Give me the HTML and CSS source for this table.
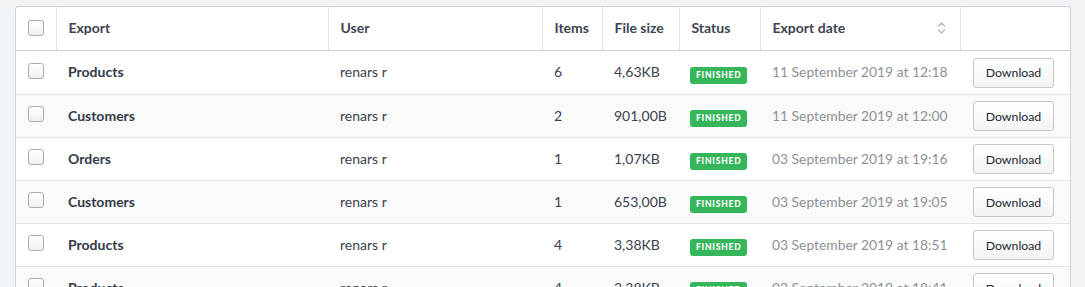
FILE: index.html
```html
<!DOCTYPE html>
<html>
<head>
<meta charset="utf-8">
<link rel="stylesheet" href="styles.css">
</head>
<body>
<div class="card">
<table class="exports">
<colgroup>
<col class="c-check"><col class="c-export"><col class="c-user"><col class="c-items"><col class="c-size"><col class="c-status"><col class="c-date"><col class="c-action">
</colgroup>
<thead>
<tr>
<th class="check"><span class="box"></span></th>
<th>Export</th>
<th>User</th>
<th>Items</th>
<th>File size</th>
<th>Status</th>
<th class="sortable"><span class="th-inner">Export date<svg class="sort" width="9" height="14" viewBox="0 0 9 14"><path d="M1.5 5 L4.5 2 L7.5 5" fill="none" stroke="#b5bec8" stroke-width="1.6" stroke-linecap="round" stroke-linejoin="round"/><path d="M1.5 9 L4.5 12 L7.5 9" fill="none" stroke="#b5bec8" stroke-width="1.6" stroke-linecap="round" stroke-linejoin="round"/></svg></span></th>
<th></th>
</tr>
</thead>
<tbody>
<tr><td class="check"><span class="box"></span></td><td class="name">Products</td><td>renars r</td><td>6</td><td>4,63KB</td><td><span class="badge">Finished</span></td><td class="date">11 September 2019 at 12:18</td><td class="action"><button class="btn">Download</button></td></tr>
<tr><td class="check"><span class="box"></span></td><td class="name">Customers</td><td>renars r</td><td>2</td><td>901,00B</td><td><span class="badge">Finished</span></td><td class="date">11 September 2019 at 12:00</td><td class="action"><button class="btn">Download</button></td></tr>
<tr><td class="check"><span class="box"></span></td><td class="name">Orders</td><td>renars r</td><td>1</td><td>1,07KB</td><td><span class="badge">Finished</span></td><td class="date">03 September 2019 at 19:16</td><td class="action"><button class="btn">Download</button></td></tr>
<tr><td class="check"><span class="box"></span></td><td class="name">Customers</td><td>renars r</td><td>1</td><td>653,00B</td><td><span class="badge">Finished</span></td><td class="date">03 September 2019 at 19:05</td><td class="action"><button class="btn">Download</button></td></tr>
<tr><td class="check"><span class="box"></span></td><td class="name">Products</td><td>renars r</td><td>4</td><td>3,38KB</td><td><span class="badge">Finished</span></td><td class="date">03 September 2019 at 18:51</td><td class="action"><button class="btn">Download</button></td></tr>
<tr><td class="check"><span class="box"></span></td><td class="name">Products</td><td>renars r</td><td>4</td><td>3,38KB</td><td><span class="badge">Finished</span></td><td class="date">03 September 2019 at 18:41</td><td class="action"><button class="btn">Download</button></td></tr>
</tbody>
</table>
</div>
</body>
</html>
```
FILE: styles.css
```css
html, body {
  margin: 0;
  background: #f1f4f7;
  height: 100%;
  overflow: hidden;
}
body {
  padding: 6px 14px 0 15px;
  font-family: Lato, "Open Sans", sans-serif;
  font-size: 14px;
  color: #3a4150;
}
.card {
  background: #fff;
  border: 1px solid #cdd3d9;
  border-radius: 3px;
  overflow: hidden;
}
.exports {
  width: 100%;
  border-collapse: collapse;
  table-layout: fixed;
}
.c-check { width: 40px; }
.c-export { width: 272px; }
.c-user { width: 214px; }
.c-items { width: 60px; }
.c-size { width: 77px; }
.c-status { width: 81px; }
.c-date { width: 200px; }
.c-action { width: auto; }
th {
  height: 41px;
  padding: 0 12px 2px;
  text-align: left;
  font-weight: 700;
  color: #3d4452;
  border-left: 1px solid #e3e6e9;
  border-bottom: 1px solid #c9d0d6;
  white-space: nowrap;
}
th:first-child { border-left: none; }
td {
  height: 40px;
  padding: 0 12px 2px;
  border-top: 1px solid #e2e4e6;
  white-space: nowrap;
  color: #3a4150;
}
tbody tr:first-child td { border-top: none; height: 41px; }
tbody tr:nth-child(even) td { background: #fafafa; }
th.check { padding: 0 0 2px 12px; }
td.check { padding: 0 0 2px 12px; }
td.action { padding-left: 13px; }
td.name { font-weight: 700; color: #333a48; }
td.date { color: #8c9198; font-size: 13.85px; }
.box {
  display: block;
  width: 14px;
  height: 14px;
  border: 1px solid #a9adb1;
  border-radius: 3px;
  background: linear-gradient(#ffffff, #f0f0f0);
}
td.check .box { position: relative; top: -1px; }
.th-inner {
  display: flex;
  align-items: center;
  justify-content: space-between;
  padding-right: 2px;
}
.sort { display: block; }
.badge {
  display: inline-block;
  background: #35b65a;
  color: #fff;
  font-size: 8.5px;
  font-weight: 900;
  letter-spacing: 0.8px;
  text-transform: uppercase;
  padding: 0 5px 0 6px;
  height: 17px;
  line-height: 17px;
  border-radius: 3px;
  margin-left: -1px;
  position: relative;
  top: 2px;
}
.btn {
  font-family: Lato, "Open Sans", sans-serif;
  font-size: 12.3px;
  color: #222833;
  width: 81px;
  height: 30px;
  border: 1px solid #c5c8cb;
  border-radius: 3px;
  background: linear-gradient(#ffffff, #f3f3f3);
  padding: 0;
  cursor: pointer;
  display: block;
  position: relative;
  top: 1px;
}
```
